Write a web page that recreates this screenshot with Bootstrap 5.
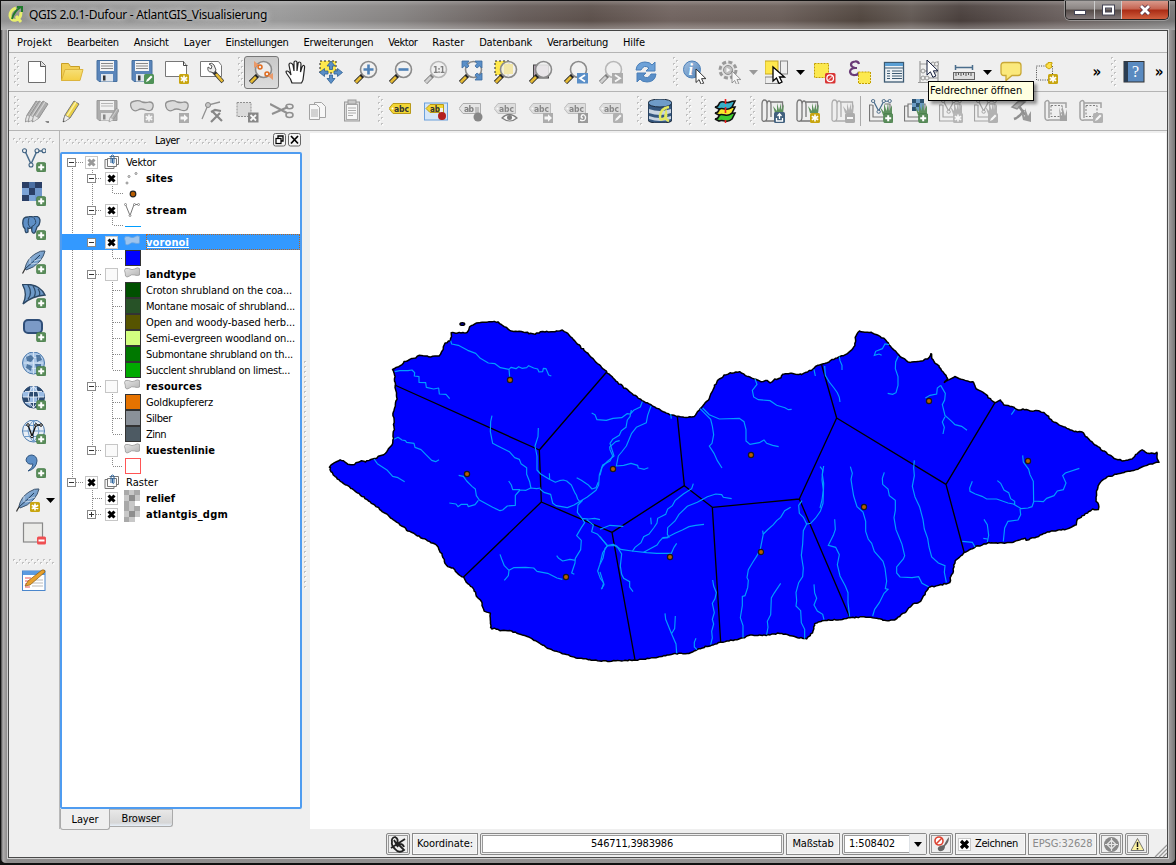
<!DOCTYPE html>
<html lang="de">
<head>
<meta charset="utf-8">
<title>QGIS 2.0.1-Dufour - AtlantGIS_Visualisierung</title>
<link href="https://cdn.jsdelivr.net/npm/bootstrap@5.3.0/dist/css/bootstrap.min.css" rel="stylesheet">
<script src="https://cdn.jsdelivr.net/npm/bootstrap@5.3.0/dist/js/bootstrap.bundle.min.js"></script>
<style>
html,body{height:100%;margin:0;overflow:hidden;background:#111}
body{font-family:"DejaVu Sans Condensed","DejaVu Sans",sans-serif;font-stretch:condensed;font-size:11px;line-height:16px;color:#000}
svg{display:block;flex:none;overflow:visible}
.win{width:1176px;height:865px;background:linear-gradient(90deg,#444 0,#b0aeae 2px,#8e8c8c 6px,#9b9999 1169px,#777 1174px,#333);border:2px solid #111;border-width:1px 1px 2px;border-radius:7px 7px 6px 6px;padding:0 7px 6px 7px}
.titlebar{height:29px;margin:0 -7px;padding:0 6px 0 8px;background:linear-gradient(180deg,#ffffff40 0,#ffffff10 5px,#ffffff00 20px,#ffffff50 29px),linear-gradient(90deg,#929292 0,#9a9a9a 280px,#858281 400px,#665c59 520px,#5c504b 590px,#70635f 670px,#6a5e59 780px,#51463f 860px,#625954 910px,#493f3c 960px,#695f5d 1060px,#777 1176px)}
.title-text{font-family:"Noto Sans","Open Sans",sans-serif;font-stretch:normal;font-size:12px;text-shadow:0 0 7px #ddd,0 0 5px #ccc}
.winbtns{height:19px;border:1px solid #222;border-top:0;border-radius:0 0 5px 5px;box-shadow:0 0 0 1px #bbb8;overflow:hidden;margin-top:0}
.winbtns>div{background:linear-gradient(#a8a3a1,#8a8482 45%,#554b48 50%,#82797a)}
.winbtns>div+div{border-left:1px solid #ccc}
.winbtns>.x{background:linear-gradient(#d99a8c,#c56350 45%,#a92b14 50%,#d15f3e)}
.client{height:828px;background:#efefef;border:1px solid #4a4a4a;border-top-color:#444;box-shadow:0 0 0 1px #cfcfcf}
.menus{height:22px;padding:3.5px 0 0 8px;gap:14.900px;border-bottom:1px solid #b4b4b4}
.tb{border-bottom:1px solid #b4b4b4;height:39px}
.slot{flex:none;height:33px;border:1px solid transparent;border-radius:3px;display:flex;align-items:center;justify-content:center}
.slot.on{background:linear-gradient(#c8c8c8,#dcdcdc);border-color:#777}
.off{filter:grayscale(1);opacity:.55}
.hand{flex:none;display:flex;align-items:center;justify-content:flex-end}
.vtools{width:51px;border-right:1px solid #b8b8b8;padding-top:7px}
.vi{height:34px;display:flex;align-items:center;justify-content:center;position:relative}
.dock{width:242px}
.dgrip{width:8px;height:230px;margin-top:230px;padding-left:2px}
.dock-title{height:21px;padding:2px 0 0 3px}
.tree{height:657px;border:2px solid #4f9cf0;border-radius:2px;background:#fff;position:relative;overflow:hidden}
.trow{height:16px;display:flex;align-items:center;position:relative;white-space:nowrap}
.trow.sel{background:#3399ff;color:#fff}
.trow.sel .nm span{text-decoration:underline}
.trow.sel .nm{outline:1px dotted #b8641e;outline-offset:-1px}
.nm{flex:1;line-height:17px;height:16px}
.lines{position:absolute;left:0;top:0}
.sw{width:16px;height:16px;border:1px solid #333}
.tab-a{width:50px;height:21px;border:1px solid #aaa;border-top:0;border-radius:0 0 3px 3px;text-align:center;padding-top:2px;line-height:17px}
.tab-b{width:63px;height:18px;border:1px solid #aaa;border-top-color:#b5b5b5;border-left:0;border-radius:0 0 3px 0;background:linear-gradient(#e8e8e8,#d6d6d6 80%,#e7f0fa);text-align:center;line-height:18px}
.canvas{background:#fff;width:856px;height:696px}
.status{height:28px;padding-right:18px;gap:2px;padding-top:2px}
.sb{height:22px;border:1px solid #8a8a8a;box-shadow:inset 0 0 0 1px #f8f8f8;display:flex;align-items:center;justify-content:center;flex:none;white-space:nowrap}
.sb.push{box-shadow:inset 0 0 0 1px #eee,inset 0 0 0 2px #999;border-radius:2px}
.tip{position:absolute;left:928px;top:81px;width:106px;height:20px;background:#ffffe1;border:1px solid #000;box-shadow:3px 3px 3px #0006;padding:0 0 0 1px;line-height:17px;z-index:5;white-space:nowrap}
.ptr{position:absolute;left:926px;top:59px;z-index:6}
[data-w]{display:inline-block;white-space:nowrap}
.chev{font-size:15px;font-weight:bold}
</style>
</head>
<body>
<svg class="invisible position-absolute" width="0" height="0">
<defs>
<linearGradient id="gy" x1="0" y1="0" x2="0" y2="1"><stop offset="0" stop-color="#f6df77"/><stop offset="1" stop-color="#f4cf45"/></linearGradient>
<linearGradient id="gb" x1="0" y1="0" x2="1" y2="1"><stop offset="0" stop-color="#a5c2e2"/><stop offset="1" stop-color="#4f82b8"/></linearGradient>
<linearGradient id="gg" x1="0" y1="0" x2="1" y2="1"><stop offset="0" stop-color="#e6e6e6"/><stop offset="1" stop-color="#b4b4b4"/></linearGradient>
<g id="b-star"><rect x="14" y="14" width="10" height="10" rx="1.500" fill="#c8a50f"/><path d="M19 15.500v7M15.800 17.200l6.400 3.600M15.800 20.800l6.400-3.600" stroke="#fff" stroke-width="1.600"/></g>
<g id="b-plus"><rect x="14.500" y="14.500" width="9.500" height="9.500" rx="2" fill="#5a8c5a" stroke="#3f7a43" stroke-width=".6"/><path d="M19.200 16.200v6M16.200 19.200h6" stroke="#fff" stroke-width="2"/></g>
<g id="b-pen"><rect x="14" y="14" width="10" height="10" rx="1.500" fill="#4f9257"/><path d="M16 22l1-2.500 4-4 1.500 1.500-4 4z" fill="#fff"/></g>
<g id="b-arr"><rect x="14" y="14" width="10" height="10" fill="#777"/><path d="M15.500 17.500h3.500v-2.200l4 3.700-4 3.700v-2.200h-3.500z" fill="#fff"/></g>
<g id="cur"><path d="M0 0v15l3.400-3.200 2.300 5.200 2.800-1.200-2.300-5.100h4.800z" fill="#fff" stroke="#222" stroke-width="1"/></g>
<g id="mag"><path d="M1.500 22.500L9 15" stroke="#222" stroke-width="4.500"/><path d="M1.800 22.300L7 17" stroke="#e6bb35" stroke-width="2.800"/><circle cx="14.500" cy="9.500" r="8" fill="#f1f1f1" fill-opacity=".85" stroke="#8a8a8a" stroke-width="1.600"/></g>
<g id="tag"><path d="M0 9.500L4 4.500h17.500v10H4z" fill="#f2d634" stroke="#b99a1a"/><circle cx="3.500" cy="9.500" r="1" fill="#fff"/><text x="5" y="12.500" font-family="DejaVu Sans" font-weight="bold" font-size="8.500" textLength="15" fill="#333">abc</text></g>
<g id="scroll"><path d="M1 21V5q0-4 2.500-4T6 5v13q0 4-2.500 4M6 6q0-4 2-4t2 4v12M1 21q1 2 4 1h9M10 3h11.500v10" fill="#eee" stroke="#777" stroke-width="1.300"/><path d="M14 14l-2-7 4 5V4l2 7 2-7v7l3-6-1 9z" fill="#5e915e"/></g>
<g id="grass"><path d="M13 15l-3-8 4 5V3l2.500 8L18 3l1 8 3-6v10z" fill="#5e915e"/></g>
<g id="vec"><path d="M3 3l6 13L15 3h6" fill="none" stroke="#4a6d8c" stroke-width="1.500"/><g fill="#efefef" stroke="#3d6080" stroke-width="1.100"><circle cx="2.500" cy="2.700" r="2"/><circle cx="9" cy="17" r="2"/><circle cx="15" cy="2.700" r="2"/><circle cx="22" cy="2.700" r="2"/></g></g>
<g id="pencil"><path d="M3 23l2-7L14 2l5 3-9 14z" fill="#e9cf46" stroke="#777"/><path d="M7 17L16 3" stroke="#fbf0a0" stroke-width="1.500"/><path d="M3 23l1-4 3 1.800z" fill="#333"/><path d="M5 16l5 3-5 3.500-1.500-1z" fill="#eee" stroke="#777" stroke-width=".6"/></g>
<g id="gpencil"><path d="M3 23l2-7L14 2l5 3-9 14z" fill="#777" stroke="#444"/><path d="M7 17L16 3" stroke="#bbb" stroke-width="1.300"/><path d="M5 16l5 3-5 3.500-1.500-1z" fill="#ddd" stroke="#555" stroke-width=".6"/></g>
<g id="feather"><path d="M.5 23.500Q4 16 12 9" fill="none" stroke="#333" stroke-width="1.200"/><path d="M3 18Q5 9 13 4q6-4 10-3-1 5-5 10-6 7-14 9z" fill="url(#gb)" stroke="#40566e"/><path d="M3 19Q11 12 18 5" stroke="#1e3a58" fill="none"/><path d="M9 14l7-1M12 11l7-2M8 14l0-6" stroke="#dce8f4" stroke-width=".7"/></g>
<g id="globe"><circle cx="11.500" cy="11" r="11" fill="#e8eef5" stroke="#4a78ab"/><path d="M1 11h21M3 5.500h17M3 16.500h17M11.500 0v22M11.500 0q-11 11 0 22M11.500 0q11 11 0 22" fill="none" stroke="#6e9bcb"/></g>
</defs>
<symbol id="i-new" viewBox="0 0 24 24"><path d="M3.500 1.500h13l4 4v17h-17z" fill="#fff" stroke="#6e6e6e"/><path d="M15.500 1.500v5h5" fill="#ddd" stroke="#555"/></symbol>
<symbol id="i-open" viewBox="0 0 24 24"><path d="M1.500 20.500v-17h7l2 3h9v3" fill="#f2cf55" stroke="#c89f25"/><path d="M1.500 20.500L5 9.500h18l-3 11z" fill="url(#gy)" stroke="#dcb43d"/></symbol>
<symbol id="i-save" viewBox="0 0 24 24"><path d="M2 .5h20v21H4l-2-2z" fill="#5a85ba" stroke="#47719f"/><rect x="5" y="1" width="14" height="10" fill="#f4f4f4"/><path d="M6 3.500h12M6 6h12M6 8.500h12" stroke="#888"/><rect x="6" y="14" width="12" height="7.500" fill="#dfe5ec"/><rect x="8" y="15.500" width="2.500" height="5" fill="#333"/></symbol>
<symbol id="i-saveas" viewBox="0 0 24 24"><use href="#i-save" width="24" height="24"/><use href="#b-pen"/></symbol>
<symbol id="i-newprint" viewBox="0 0 24 24"><path d="M.5 1.500h18l3 4v11H.500z" fill="#fff" stroke="#777"/><path d="M18.500 1.500v4h4" fill="none" stroke="#444"/><use href="#b-star"/></symbol>
<symbol id="i-printmgr" viewBox="0 0 24 24"><path d="M.5 1.500h18l3 4v11H.500z" fill="#fff" stroke="#777"/><path d="M13 11l10 11" stroke="#333" stroke-width="4"/><path d="M16 14l6.500 7.500" stroke="#e9bd35" stroke-width="2.600"/><path d="M8 7q-1 5 3 5l3 1 2-3-2-5q-2-3-5-1l3 2-1 3z" fill="#eee" stroke="#555"/></symbol>
<symbol id="i-touch" viewBox="0 0 24 24"><use href="#mag"/><g stroke="#e06a1c" fill="none" stroke-width="1.500"><path d="M5 1l5 4-5 3z" fill="#e99a6b" stroke="none"/><circle cx="11" cy="7" r="2"/><circle cx="18" cy="14" r="2"/><path d="M24 20l-5-4 5-3z" fill="#e99a6b" stroke="none"/></g></symbol>
<symbol id="i-pan" viewBox="0 0 24 24"><path d="M8 23q-1-4-5-9-2-3 0-3t4 4L5 5q0-2 1.500-2T9 5l1 6V2.500Q10 1 11.500 1T13 2.500V11l1-7q0-2 1.500-2T17 4l-.5 8L18 7q1-2 2-1.500t.5 2.500L19.500 16q0 4-2 7z" fill="#fff" stroke="#222" stroke-width="1.200"/></symbol>
<symbol id="i-pansel" viewBox="0 0 24 24"><rect x="1" y="1" width="16" height="12" fill="#ffe84d" stroke="#222" stroke-dasharray="2 2"/><g fill="#5a8fc8" stroke="#2f5f92" stroke-width=".8"><path d="M12 1l4 5h-2.500v3.500h-3V6H8zM12 23.500l4-5h-2.500V15h-3v3.500H8zM.5 12.500l5-4V11H9v3H5.500v2.500zM23.500 12.500l-5-4V11H15v3h3.500v2.500z"/></g></symbol>
<symbol id="i-zin" viewBox="0 0 24 24"><use href="#mag"/><path d="M14.500 4.500v10M9.500 9.500h10" stroke="#4f82b8" stroke-width="2.600"/></symbol>
<symbol id="i-zout" viewBox="0 0 24 24"><use href="#mag"/><path d="M9.500 9.500h10" stroke="#4f82b8" stroke-width="2.600"/></symbol>
<symbol id="i-z11" viewBox="0 0 24 24"><use href="#mag"/><text x="9" y="13" font-family="DejaVu Sans" font-weight="bold" font-size="8.500" textLength="12" fill="#222">1:1</text></symbol>
<symbol id="i-zfull" viewBox="0 0 24 24"><use href="#mag"/><path d="M3 1h7L8 3.500 10 6 8 8 5.500 6 3 8zM23 1h-7l2 2.500L16 6l2 2 2.500-2L23 8zM23 20h-7l2-2.500-2-2.500 2-2 2.500 2 2.500-2z" fill="#5a8fc8" stroke="#3a6ba0" stroke-width=".8"/></symbol>
<symbol id="i-zsel" viewBox="0 0 24 24"><rect x="1" y="1" width="14" height="14" fill="#ffe84d" stroke="#222" stroke-dasharray="2 2"/><use href="#mag"/><rect x="10" y="4" width="9" height="10" fill="#f2e6a8"/></symbol>
<symbol id="i-zlay" viewBox="0 0 24 24"><rect x="4.500" y="5" width="15" height="13" fill="#b3a2b3" stroke="#444"/><use href="#mag"/></symbol>
<symbol id="i-zlast" viewBox="0 0 24 24"><use href="#mag"/><rect x="13" y="13" width="11" height="10.500" fill="#5a8fc8"/><path d="M21 15l-5 3.200 5 3.300" fill="none" stroke="#fff" stroke-width="1.800"/></symbol>
<symbol id="i-znext" viewBox="0 0 24 24"><use href="#mag"/><rect x="13" y="13" width="11" height="10.500" fill="#777"/><path d="M16 15l5 3.200-5 3.300" fill="none" stroke="#fff" stroke-width="1.800"/></symbol>
<symbol id="i-refresh" viewBox="0 0 24 24"><path d="M2 10Q3 2 11 2q5 0 7 3l3-3v9h-9l3-3q-5-4-8 2z" fill="#6ea2d8" stroke="#4a7fb8"/><path d="M22 14q-1 8-9 8-5 0-7-3l-3 3v-9h9l-3 3q5 4 8-2z" fill="#5a8fc8" stroke="#4a7fb8"/></symbol>
<symbol id="i-info" viewBox="0 0 24 24"><circle cx="9" cy="9.500" r="8.500" fill="url(#gb)" stroke="#4a7fb8"/><text x="5.500" y="15" font-family="Liberation Serif" font-style="italic" font-weight="bold" font-size="16" fill="#fff">i</text><use href="#cur" transform="translate(13 9) scale(.9)"/></symbol>
<symbol id="i-gear" viewBox="0 0 24 24"><circle cx="10" cy="10" r="8" fill="#ddd" stroke="#555" stroke-width="3" stroke-dasharray="4 2.300"/><circle cx="10" cy="10" r="4.500" fill="#999" stroke="#444"/><path d="M8.500 7.500v5l4-2.500z" fill="#fff"/><use href="#cur" transform="translate(14 11) scale(.8)"/></symbol>
<symbol id="i-select" viewBox="0 0 24 24"><rect x="0" y="1" width="13" height="13" fill="#ffe84d" stroke="#c8a820"/><rect x="15.500" y="1" width="7" height="13" fill="#eee" stroke="#888"/><rect x="0" y="17" width="13" height="6.500" fill="#eee" stroke="#888"/><path d="M8 7l0 14 3.500-3 2.500 5.500 3-1.500-2.500-5h5z" fill="#fff" stroke="#000" stroke-width="1.300"/></symbol>
<symbol id="i-desel" viewBox="0 0 24 24"><rect x="2.500" y="3.500" width="14" height="14" fill="#fce94f" stroke="#c4a000" stroke-dasharray="2 1"/><rect x="13" y="13" width="10.500" height="10.500" rx="1.500" fill="#d93434"/><circle cx="18.200" cy="18.200" r="3.300" fill="none" stroke="#fff" stroke-width="1.300"/><path d="M16 20.500l4.500-4.500" stroke="#fff"/></symbol>
<symbol id="i-expr" viewBox="0 0 24 24"><path d="M12 4Q11 1 8 1.500 4 2 4 4.500 4 7 8 8q-5 .5-5 4 1 3.500 5 3 3.500 0 4-3M7 8h3" fill="none" stroke="#6a3b77" stroke-width="2.200"/><rect x="11.500" y="12" width="12" height="11.500" fill="#fce94f" stroke="#c4a000" stroke-dasharray="2 1"/></symbol>
<symbol id="i-table" viewBox="0 0 24 24"><rect x="2.500" y="2.500" width="19" height="19.500" fill="#eef2f5" stroke="#3c5a72" stroke-width="1.300"/><path d="M3 4.500h18" stroke="#5a9fd4" stroke-width="3"/><path d="M3 8h18M5 11h3M10 11h10M5 13.500h3M10 13.500h10M5 16h3M10 16h10M5 18.500h3M10 18.500h10" stroke="#3c5a72" stroke-width="1.100"/></symbol>
<symbol id="i-abacus" viewBox="0 0 24 24"><path d="M3 1v21M21 1v21M3 4h18M3 11h18M3 18h18M1 22.500h22" stroke="#999" stroke-width="1.200"/><g fill="#eee" stroke="#999"><circle cx="16" cy="4" r="2"/><circle cx="19.500" cy="4" r="2"/><circle cx="6" cy="11" r="2"/><circle cx="18" cy="11" r="2"/><circle cx="6" cy="18" r="2"/><circle cx="10" cy="18" r="2"/></g></symbol>
<symbol id="i-ruler" viewBox="0 0 24 24"><path d="M3 7.500h18M3.500 5v5M20.500 5v5" stroke="#4a6d8c" stroke-width="1.500"/><rect x="1.500" y="12.500" width="21" height="7" fill="#ddd" stroke="#666"/><path d="M4 13v3M6.500 13v2M9 13v3M11.500 13v2M14 13v3M16.500 13v2M19 13v3" stroke="#555"/></symbol>
<symbol id="i-tip" viewBox="0 0 24 24"><path d="M5 2.500h14q3 0 3 3v7q0 3-3 3h-6l-6 5v-5H5q-3 0-3-3v-7q0-3 3-3z" fill="#fbe97c" stroke="#c9a836" stroke-width="1.300"/></symbol>
<symbol id="i-bookmark" viewBox="0 0 24 24"><rect x="2.500" y="6" width="16" height="14" fill="none" stroke="#444" stroke-dasharray="1 1.300"/><path d="M12 4h2V2.500h4V4h-1l1 3-3 2-3-2z" fill="#ffe14a" stroke="#c8a50f"/><use href="#b-star"/></symbol>
<symbol id="i-help" viewBox="0 0 24 24"><rect x="2" y="1.500" width="20" height="20.500" fill="#5a8ac0" stroke="#333"/><rect x="2" y="1.500" width="4" height="20.500" fill="#2b3d52"/><text x="10" y="17" font-family="Liberation Serif" font-size="16" fill="#fff">?</text></symbol>
<symbol id="i-pencils" viewBox="0 0 24 24"><use href="#gpencil" transform="translate(-3 0)"/><use href="#gpencil"/><use href="#gpencil" transform="translate(4 0)"/><path d="M20 22h6l-3 3z" fill="#333"/></symbol>
<symbol id="i-pencil" viewBox="0 0 24 24"><use href="#pencil"/></symbol>
<symbol id="i-saveedit" viewBox="0 0 24 24"><path d="M2 1.500h20v20H4l-2-2z" fill="#777" stroke="#555"/><rect x="5" y="2" width="14" height="9" fill="#f4f4f4"/><path d="M6 4.500h12M6 7h12" stroke="#888"/><rect x="6" y="14" width="12" height="7.500" fill="#ddd"/><rect x="8" y="15.500" width="2.500" height="5" fill="#333"/><use href="#gpencil" transform="translate(12 8) scale(.65)"/></symbol>
<symbol id="i-addf" viewBox="0 0 24 24"><path d="M2 10Q-2 3 5 2q4-1 7 1 4 1 7 0 5 0 4 5-1 5-7 3-5-2-8 0-4 2-6-1z" fill="#ccc" stroke="#444" stroke-width="1.300"/><rect x="14" y="14" width="10" height="10" rx="1.500" fill="#888"/><path d="M19 15.500v7M15.800 17.200l6.400 3.600M15.800 20.800l6.400-3.600" stroke="#fff" stroke-width="1.600"/></symbol>
<symbol id="i-movef" viewBox="0 0 24 24"><path d="M2 10Q-2 3 5 2q4-1 7 1 4 1 7 0 5 0 4 5-1 5-7 3-5-2-8 0-4 2-6-1z" fill="#ccc" stroke="#444" stroke-width="1.300"/><use href="#b-arr"/></symbol>
<symbol id="i-node" viewBox="0 0 24 24"><path d="M2 20L8 6l12-3" fill="none" stroke="#444" stroke-width="1.300"/><circle cx="8" cy="6" r="2.500" fill="#aaa" stroke="#333"/><path d="M11 23l9-9M13 13l9 9M11 13l4-2 6 1" fill="none" stroke="#333" stroke-width="2.200"/></symbol>
<symbol id="i-delsel" viewBox="0 0 24 24"><rect x="2" y="3.500" width="14" height="14" fill="#ccc" stroke="#444" stroke-dasharray="2 1"/><rect x="13" y="13.500" width="10.500" height="10" fill="#333"/><path d="M15.500 16l5.500 5.500M21 16l-5.500 5.500" stroke="#fff" stroke-width="1.800"/></symbol>
<symbol id="i-cut" viewBox="0 0 24 24"><path d="M0 5l17 9M2 15l16-7" stroke="#444" stroke-width="2"/><ellipse cx="19.500" cy="7.500" rx="3.500" ry="2.200" fill="none" stroke="#444" stroke-width="1.600"/><ellipse cx="19.500" cy="16" rx="3.500" ry="2.500" fill="none" stroke="#444" stroke-width="1.600"/></symbol>
<symbol id="i-copy" viewBox="0 0 24 24"><path d="M9.500 3.500h7l4 4v11h-11z" fill="#fff" stroke="#666"/><path d="M4.500 5.500h7l3 3v12h-10z" fill="#fff" stroke="#666"/><path d="M6 11h7M6 13h7M6 15h7M6 17h7" stroke="#777"/></symbol>
<symbol id="i-paste" viewBox="0 0 24 24"><rect x="4.500" y="3" width="15" height="19" fill="#ccc" stroke="#555"/><rect x="6.500" y="5.500" width="11" height="15" fill="#fff" stroke="#777"/><rect x="8" y="1" width="8" height="4" fill="#aaa" stroke="#555"/><path d="M8 9h8M8 11.500h8M8 14h8M8 16.500h5" stroke="#777"/></symbol>
<symbol id="i-abc" viewBox="0 0 24 24"><use href="#tag"/></symbol>
<symbol id="i-abcpin" viewBox="0 0 24 24"><rect x=".5" y="4" width="23" height="17" fill="#d5e6f8" stroke="#6ba0dc"/><path d="M2 9.500l4-4h13.500v8H6z" fill="#f2d634" stroke="#b99a1a"/><text x="6" y="12.500" font-family="DejaVu Sans" font-weight="bold" font-size="8" textLength="10" fill="#333">ab</text><path d="M17.500 9v8" stroke="#eee" stroke-width="3"/><circle cx="18" cy="17" r="4" fill="#b32020"/></symbol>
<symbol id="i-abcpin2" viewBox="0 0 24 24"><path d="M0 9.500L4 4.500h17.500v10H4z" fill="#ddd" stroke="#777"/><text x="5" y="12.500" font-family="DejaVu Sans" font-weight="bold" font-size="8.500" textLength="10" fill="#222">ab</text><path d="M18 8v8" stroke="#999" stroke-width="4"/><circle cx="19" cy="18" r="4.500" fill="#333"/></symbol>
<symbol id="i-abceye" viewBox="0 0 24 24"><use href="#tag"/><path d="M8 19q7-7 15 0-7 6-15 0z" fill="#fff" stroke="#222" stroke-width="1.200"/><circle cx="15.500" cy="18.500" r="2.500" fill="#222"/></symbol>
<symbol id="i-abcmove" viewBox="0 0 24 24"><use href="#tag"/><use href="#b-arr"/></symbol>
<symbol id="i-abcrot" viewBox="0 0 24 24"><use href="#tag"/><rect x="14" y="14" width="10" height="10" fill="#555"/><path d="M16 21q6 2 5.500-3-1-3-3.500-2-2 3 1 3" fill="none" stroke="#fff" stroke-width="1.400"/></symbol>
<symbol id="i-abcedit" viewBox="0 0 24 24"><use href="#tag"/><use href="#b-pen"/></symbol>
<symbol id="i-db" viewBox="0 0 24 24"><path d="M0 4v17q0 3 12 3t12-3V4z" fill="#35577f" stroke="#1d2c3e"/><path d="M1 10q11 4 22 0v4q-11 4-22 0zM1 17q11 4 22 0v3q-11 4-22 0z" fill="#c8d4e2"/><ellipse cx="12" cy="4" rx="12" ry="4" fill="#6f9cc8" stroke="#1d2c3e"/><path d="M21 8q-8 1-9 9 0 5 3 3 4-1 3-6-2 6 3 8" fill="none" stroke="#e4e860" stroke-width="2.500"/></symbol>
<symbol id="i-layers" viewBox="0 0 24 24"><g stroke="#111" stroke-width="1.600"><path d="M2 20q3 0 4-3t5-2 6 0 5-1l-3 6q-3 3-7 2t-6 0z" fill="#3ecb2f"/><path d="M2 14q3 0 4-3t5-2 6 0 5-1l-3 6q-3 3-7 2t-6 0z" fill="#f7e92c"/><path d="M2 8q3 0 4-3t5-2 6 0 5-1l-3 6q-3 3-7 2t-6 0z" fill="#39b0c9"/></g><path d="M12.500 0v5M12.500 8v6M12.500 21v3" stroke="#e22" stroke-width="1.600"/></symbol>
<symbol id="i-gr1" viewBox="0 0 24 24"><use href="#scroll"/><rect x="13" y="13" width="11" height="11" rx="1.500" fill="#41607e"/><path d="M15.500 19v3h6v-3M18.500 20v-5M16.500 17l2-2.200 2 2.200" fill="none" stroke="#fff" stroke-width="1.300"/></symbol>
<symbol id="i-gr2" viewBox="0 0 24 24"><use href="#scroll"/><use href="#b-star"/></symbol>
<symbol id="i-gr3" viewBox="0 0 24 24"><use href="#scroll"/><rect x="14" y="14" width="10" height="10" rx="1.500" fill="#777"/><path d="M16 19h6" stroke="#fff" stroke-width="2"/></symbol>
<symbol id="i-gv1" viewBox="0 0 24 24"><path d="M3.500 6H.5v16h14M16 5h5v8M4 6v12h10" fill="none" stroke="#777" stroke-width="1.200"/><g transform="translate(2 0) scale(.85 .75)"><use href="#vec"/></g><use href="#grass" transform="translate(1 1)"/><use href="#b-plus"/></symbol>
<symbol id="i-gv2" viewBox="0 0 24 24"><path d="M3.500 7H.5v15h14M4 5h17v13H4z" fill="none" stroke="#777" stroke-width="1.200"/><path d="M8 0h12v12H8z" fill="#6c9cc4"/><path d="M8 0h4v4H8zM16 0h4v4h-4zM12 4h4v4h-4zM8 8h4v4H8z" fill="#2c5270"/><use href="#grass" transform="translate(1 1)"/><use href="#b-plus"/></symbol>
<symbol id="i-gv3" viewBox="0 0 24 24"><path d="M3.500 6H.5v16h14M16 5h5v8M4 6v12h10" fill="none" stroke="#666" stroke-width="1.200"/><g transform="translate(2 0) scale(.85 .75)"><use href="#vec"/></g><use href="#grass" transform="translate(1 0)"/><rect x="14" y="14" width="10" height="10" rx="1.500" fill="#888"/><path d="M19 15.500v7M15.800 17.200l6.400 3.600M15.800 20.800l6.400-3.600" stroke="#fff" stroke-width="1.600"/></symbol>
<symbol id="i-gv4" viewBox="0 0 24 24"><path d="M3.500 6H.5v16h14M16 5h5v8M4 6v12h10" fill="none" stroke="#666" stroke-width="1.200"/><g transform="translate(2 0) scale(.85 .75)"><use href="#vec"/></g><use href="#grass" transform="translate(1 0)"/><use href="#b-pen"/></symbol>
<symbol id="i-tools" viewBox="0 0 24 24"><path d="M3 8l7-6 6 1-8 7z" fill="#888" stroke="#444" stroke-width="1.500"/><path d="M10 7l6 9M5 20q6-2 10-9" fill="none" stroke="#444" stroke-width="2.500"/><path d="M14 21l-2-9 4 6V9l3 8 3-5v11z" fill="#555"/></symbol>
<symbol id="i-reg1" viewBox="0 0 24 24"><path d="M1 3v15q0 4 4 3h12M1 3q3-3 4 0v16M5 4h17v5" fill="none" stroke="#666" stroke-width="1.500"/><rect x="7" y="6.500" width="11" height="11" fill="none" stroke="#222" stroke-dasharray="2 1.500"/><path d="M16 22l-1-14 3 10V6l3 11 2-7v12z" fill="#666"/></symbol>
<symbol id="i-reg2" viewBox="0 0 24 24"><path d="M1 3v15q0 4 4 3h12M1 3q3-3 4 0v16M5 4h17v5" fill="none" stroke="#666" stroke-width="1.500"/><rect x="7" y="6.500" width="11" height="11" fill="none" stroke="#222" stroke-dasharray="2 1.500"/><use href="#b-pen"/></symbol>

<symbol id="v-vec" viewBox="0 0 24 24"><use href="#vec"/><use href="#b-plus"/></symbol>
<symbol id="v-ras" viewBox="0 0 24 24"><path d="M0 0h20v19H0z" fill="#6f97cb"/><path d="M7 0h6v6H7zM0 6h7v7H0z" fill="#4a6fa3"/><path d="M0 0h7v6H0zM13 0h7v6h-7zM7 6h6v7H7zM0 13h7v6H0z" fill="#2a3f66"/><path d="M0 6h7v7H0zM7 13h6v6H7z" fill="#7ba3d6"/><use href="#b-plus"/></symbol>
<symbol id="v-pg" viewBox="0 0 24 24"><path d="M1 5q0-4 5-4 3-1 5 0 6-2 7 3 0 5-3 7l-1 3q-1 4-3 3t-1-6q-2 2-4 1v4q-3 2-3-3Q0 10 1 5z" fill="#5e8fc6" stroke="#2b4764" stroke-width="1.300"/><path d="M7 2q-2 6 1 9M12 2q4 5-1 8" fill="none" stroke="#2b4764"/><use href="#b-plus"/></symbol>
<symbol id="v-fea" viewBox="0 0 24 24"><use href="#feather"/><use href="#b-plus"/></symbol>
<symbol id="v-sail" viewBox="0 0 24 24"><path d="M.5.500Q17-1 23 11 10 12 1 20 6 10 .5.500z" fill="#6e9ac8" stroke="#2b4764" stroke-width="1.400"/><path d="M6 1q5 8 0 14M11 2q4 6 1 11M16 5q3 4 1 7" fill="none" stroke="#2b4764" stroke-width="1.200"/><use href="#b-plus"/></symbol>
<symbol id="v-ora" viewBox="0 0 24 24"><rect x="2" y="2" width="18" height="13" rx="4" fill="#7b9ac6" stroke="#2f4e78" stroke-width="2"/><use href="#b-plus"/></symbol>
<symbol id="v-wms" viewBox="0 0 24 24"><circle cx="11.500" cy="11" r="11" fill="#a9c6e6" stroke="#4a78ab"/><path d="M2 11h19M3 5.500h17M3 16.500h17M11.500 0v22M6 2v18M17 2v18" stroke="#dce8f5" stroke-width=".8"/><path d="M4 5l5-2 3 3-3 4-4-1zM14 3h4l2 5-5 2zM5 12l5 2-1 5-5-3zM13 12h6v5l-4 2z" fill="#35608f" opacity=".8"/><use href="#b-plus"/></symbol>
<symbol id="v-wcs" viewBox="0 0 24 24"><circle cx="11.500" cy="11" r="11" fill="#2c4a70" stroke="#2c4a70"/><path d="M8 .5h7v5H8zM1 6h6v5H.500zM8 11h7v6H8zM16 6h6l.5 5H16zM3 17h5l1 4zM15 17h5l-4 4z" fill="#9bbce4"/><path d="M1 11h21M3 5.500h17M3 16.500h17M11.500 0v22M11.500 0q-11 11 0 22M11.500 0q11 11 0 22" fill="none" stroke="#e6eef8" stroke-width=".9"/><use href="#b-plus"/></symbol>
<symbol id="v-wfs" viewBox="0 0 24 24"><use href="#globe"/><path d="M6 5l4 11 4-11h5" fill="none" stroke="#111" stroke-width="1.300"/><g fill="#fff" stroke="#111"><circle cx="6" cy="5" r="1.300"/><circle cx="10" cy="16.500" r="1.300"/><circle cx="14" cy="5" r="1.300"/><circle cx="19" cy="5" r="1.300"/></g><use href="#b-plus"/></symbol>
<symbol id="v-csv" viewBox="0 0 24 24"><path d="M6 17q5-3 5-7-6 1-7-4 1-5 6-5 5 1 5 6-1 8-9 10z" fill="#5e8fc6" stroke="#2f5580"/><use href="#b-plus"/></symbol>
<symbol id="v-new" viewBox="0 0 24 24"><use href="#feather"/><use href="#b-star"/></symbol>
<symbol id="v-del" viewBox="0 0 24 24"><rect x="1.500" y="1" width="19" height="19" fill="#ebebe8" stroke="#888" stroke-width="1.200"/><rect x="15" y="14.500" width="9" height="8" rx="1.500" fill="#ef4f52"/><path d="M16.500 18.500h6" stroke="#fff" stroke-width="2"/></symbol>
<symbol id="v-edit" viewBox="0 0 24 24"><rect x=".5" y="2" width="22.500" height="19.500" fill="#fff" stroke="#4a86cc"/><path d="M1 4h22" stroke="#5a9ae0" stroke-width="4"/><path d="M3 9h6M3 12h5M3 15h4M3 18h5" stroke="#e55"/><path d="M10 11h11M10 14h11M10 17h11" stroke="#bbb"/><path d="M3 17l3-5L20 1q3-1 3 2L8 16z" fill="#e8a02c" stroke="#8a5a10" stroke-width=".7"/></symbol>

<symbol id="t-grp" viewBox="0 0 16 16"><path d="M3 5.500H1v9h9v-1.500M3.500 4.500h9v8h-9z" fill="#f8f8f8" stroke="#777"/><path d="M5.500 2.500h9v8h-2" fill="none" stroke="#777"/><path d="M7 9V2q1.500-2 3 0v7q-1 1-1.500 0V4" fill="none" stroke="#2d66a0"/></symbol>
<symbol id="t-pts" viewBox="0 0 16 16"><g fill="#fff" stroke="#888"><circle cx="5" cy="6.500" r="1"/><circle cx="12" cy="3.500" r="1"/><circle cx="3" cy="13" r="1"/></g></symbol>
<symbol id="t-line" viewBox="0 0 16 16"><path d="M1.500 2.500L6 13.500l4-11h5" fill="none" stroke="#777"/><g fill="#fff" stroke="#777" stroke-width=".8"><circle cx="1.500" cy="2.500" r="1"/><circle cx="6" cy="13.500" r="1"/><circle cx="10.500" cy="2.500" r="1"/><circle cx="14.500" cy="2.500" r="1"/></g></symbol>
<symbol id="t-poly" viewBox="0 0 16 16"><path d="M.5 4.500q0-3 4-2 4 2 6 .5 3-2 5-.5v6.500q-2 1-5 0-3-1-5 1-3 2-4 0 0-3-1-5.500z" fill="url(#gg)" stroke="#999" stroke-width=".8"/></symbol>
<symbol id="t-polys" viewBox="0 0 16 16"><path d="M.5 4.500q0-3 4-2 4 2 6 .5 3-2 5-.5v6.500q-2 1-5 0-3-1-5 1-3 2-4 0 0-3-1-5.500z" fill="#9cc4ee" stroke="#6aa4e0" stroke-width=".8"/></symbol>
<symbol id="t-ras" viewBox="0 0 16 16"><path d="M0 0h16v16H0z" fill="#c8c8c8"/><path d="M0 0h5v5H0zM10 0h6v5h-6zM0 11h5v5H0z" fill="#a9a9a9"/><path d="M5 5h6v6H5z" fill="#8e8e8e"/><path d="M11 11h5v5h-5z" fill="#fff"/></symbol>
</svg>

<div class="win">
  <div class="titlebar d-flex align-items-start">
    <svg class="mt-1" width="14" height="18" viewBox="0 0 14 18"><path d="M7 3Q1 5 1 11q1 5 6 4 5-1 5-8M7 11l5 6" fill="none" stroke="#e8ef6e" stroke-width="3"/><path d="M3 14Q5 6 12 2M8 2h5v5" fill="none" stroke="#1f7a2a" stroke-width="2"/></svg>
    <div class="title-text ms-1" style="padding:6px 0 0 2px"><span data-w="238">QGIS 2.0.1-Dufour - AtlantGIS_Visualisierung</span></div>
    <div class="winbtns d-flex ms-auto">
      <div style="width:28px"><svg width="28" height="18"><rect x="8.500" y="9.500" width="11" height="4" fill="#fff" stroke="#445"/></svg></div>
      <div style="width:27px"><svg width="27" height="18"><rect x="9" y="5.500" width="9" height="7" fill="none" stroke="#445" stroke-width="4"/><rect x="9" y="5.500" width="9" height="7" fill="none" stroke="#fff" stroke-width="2"/></svg></div>
      <div class="x" style="width:47px"><svg width="47" height="18"><path d="M19 5l8 8M27 5l-8 8" stroke="#534" stroke-width="4.500"/><path d="M19 5l8 8M27 5l-8 8" stroke="#fff" stroke-width="2.800"/></svg></div>
    </div>
  </div>

  <div class="client">
    <nav class="menus d-flex">
      <span data-w="35">Projekt</span><span data-w="52">Bearbeiten</span><span data-w="35">Ansicht</span><span data-w="27">Layer</span><span data-w="63">Einstellungen</span><span data-w="70">Erweiterungen</span><span data-w="29">Vektor</span><span data-w="32">Raster</span><span data-w="53">Datenbank</span><span data-w="61">Verarbeitung</span><span data-w="22">Hilfe</span>
    </nav>
    <div class="tb d-flex align-items-center" id="tb1"></div>
    <div class="tb d-flex align-items-center" id="tb2"></div>

    <div class="d-flex" style="height:698px">
      <div class="vtools" id="vt"></div>
      <div class="dock">
        <div class="dock-title d-flex align-items-start">
          <div class="hg" style="padding-top:6px"></div>
          <span class="mx-2" data-w="24">Layer</span>
          <div class="hg" style="padding-top:6px"></div>
          <svg class="ms-auto" width="29" height="14" viewBox="0 0 29 14"><rect x=".5" y=".5" width="12" height="12.500" rx="2" fill="#f4f4f4" stroke="#666"/><path d="M5 5V3h5v5H8" fill="none" stroke="#000" stroke-width="1.300"/><rect x="3" y="5.500" width="5" height="5" fill="#fff" stroke="#000" stroke-width="1.200"/><rect x="15.500" y=".5" width="12" height="12.500" rx="2" fill="#f4f4f4" stroke="#666"/><path d="M18 3l7 7.500M25 3l-7 7.500" stroke="#000" stroke-width="1.700"/></svg>
        </div>
        <div class="tree" id="tree">
          <svg class="lines" width="100" height="370" viewBox="62 154 100 370"><path d="M72.500 166v312M92.500 170v282M76 162.500h8M76 482.500h8M92.500 486v26M92.500 498.500h10M96 178.500h6M96 210.500h6M96 242.500h6M96 274.500h6M96 386.500h6M96 450.500h6M96 514.500h6M112.500 186v7h10M112.500 218v7h10M112.500 250v8h10M112.500 282v88h10M112.500 290.500h10M112.500 306.500h10M112.500 322.500h10M112.500 338.500h10M112.500 354.500h10M112.500 394v40h10M112.500 402.500h10M112.500 418.500h10M112.500 458v8h10" fill="none" stroke="#888" stroke-dasharray="1 1" shape-rendering="crispEdges"/></svg>
        </div>
        <div class="d-flex"><div class="tab-a"><span data-w="27">Layer</span></div><div class="tab-b"><span data-w="39">Browser</span></div><div class="flex-fill border-top border-secondary-subtle"></div></div>
      </div>
      <div class="dgrip" id="dg"></div>
      <svg class="canvas mt-auto" style="overflow:hidden" viewBox="310 133 856 696">
        <g transform="translate(320 310) scale(.33333)" stroke="#000" stroke-width="4.500" stroke-linejoin="round">
          <path id="coast" fill="#00f" d="M30 470L40 459 62 449 72 455 85 463 98 464 108 459 120 456 126 452 135 455 148 451 162 447 175 440 195 433 203 418 217 403 220 385 222 350 220 305 226 285 232 262 227 235 224 200 218 178 245 165 255 153 280 145 300 136 330 141 358 136 370 115 378 98 392 92 394 68 440 69 452 50 467 38 500 36 518 33 538 38 552 50 575 64 612 66 640 73 665 66 710 64 728 61 745 74 760 90 860 186 890 214 915 236 965 270 995 287 1050 314 1072 319 1105 323 1125 318 1140 298 1165 270 1175 245 1192 212 1215 195 1235 188 1258 186 1280 198 1305 207 1325 216 1340 210 1350 218 1365 208 1382 206 1388 192 1400 190 1445 194 1480 176 1495 164 1515 162 1540 148 1560 141 1595 123 1605 108 1607 80 1615 63 1650 67 1675 76 1700 93 1720 118 1745 143 1770 157 1800 155 1825 145 1835 130 1837 150 1855 166 1868 185 1883 203 1872 218 1890 208 1905 201 1920 206 1940 214 1962 217 1966 235 1990 247 2010 267 2025 278 2040 270 2050 283 2070 291 2082 291 2090 298 2115 299 2140 305 2155 301 2175 311 2200 335 2235 352 2260 364 2285 365 2300 381 2335 412 2385 446 2410 453 2435 446 2452 430 2465 420 2480 430 2508 430 2510 425 2510 448 2516 457 2485 463 2450 479 2405 488 2360 502 2338 519 2330 540 2328 570 2336 583 2335 600 2315 598 2295 614 2270 630 2270 644 2235 658 2185 665 2150 680 2120 690 2116 686 2070 698 2005 699 1965 711 1933 729 1905 752 1897 790 1887 819 1845 828 1825 833 1810 862 1798 878 1780 882 1755 907 1722 931 1690 932 1683 925 1625 921 1590 923 1565 929 1510 931 1485 939 1476 970 1460 987 1430 982 1380 969 1340 975 1285 976 1270 984 1202 997 1140 1015 1105 1031 1070 1031 1000 1043 945 1050 860 1054 780 1046 735 1033 685 1015 650 995 620 978 580 966 560 960 540 962 535 957 513 955 511 912 492 903 487 885 487 875 470 860 463 840 450 825 440 818 432 803 405 785 403 777 378 767 368 738 350 706 318 690 262 661 230 637 150 575 105 543 50 505 32 484z"/>
          <ellipse cx="427" cy="42" rx="7" ry="4" fill="#00f"/>
          <g fill="none" stroke-width="4"><path d="M224 225L658 420 860 186M658 420L664 576 430 802M664 576L876 667 1093 527 1072 319M876 667L945 1050M1093 527L1177 592 1202 997M1177 592L1438 567 1550 324 1505 165M1438 567L1590 923M1550 324L1878 523 2025 278M1878 523L1933 729"/></g>
          <g fill="none" stroke="#009dff" stroke-width="3.500">
            <path d="M392 92l3 10 20 4 28 15 24 9 14 15 24 14 20 2 16 12 26 5 6-6 15 4 8-6 10 5 14-2 6-6 15 7 12 3 4 9 11-1 2-10 8 1 4 9 4 10 8 3M567 178l2 22"/>
            <path d="M224 185l15-3 25 0 12-2 8 8-1 10 14 2 0 17 20 1 2 14 22 5 15-3 2 18 20 1 11 13"/>
            <path d="M222 388l12-6 12 8 10 2 4 5 22 3 3 12 18 7 14 14 18 18 12 4 10-6M162 447l10 14 30 20 16 18 16 4 20 12"/>
            <path d="M416 496l14 3 10 14 16 16 10 8 3 20 9 13 40 22 22 10 8-2 14-12 24-2 0-30 14-16 18 1 14-7 18 2 12-2M388 579l20 3 6 8 10-7 18 0 3 7 20-6 10-13M600 539l-22 0-4-14-8-12"/>
            <path d="M516 317l-4 18 -1 30 7 35 14 7 36 18 16 18 14 5 5 13 17 12 0 20 9 22 4 20M655 354l-1 26-9 28 6 30 0 42 11 12 26 16 18 9 12-5 12-2 10 3 14 12 10 22 5 8 4 12 8 10M688 490l1 18M770 503l14 8 20 13 12 13 12-4 7-17"/>
            <path d="M660 537l12 10 20 6 6 26 10 8 34 6 20-8 26-16 14-8 26-20 8-16 2-30 10-30 22-12 8-16-8-18-1-8 18-16 12-3M788 571l-14 14-2 22 14 18 8 13-10 15-14 24 14 14-2 28-16 26-1 14-10 30 8 4M786 625l20 2 18-2 16 4M710 737l6 8 12 8 22-5 16 3M540 733l5 14 8 20 14 14 14-8 36-1 24 2 10 10 32 6 28 14 16 4M567 781l-2 16-12 14M800 629l20 16-5 20 18 8 30 34-8 8-6 30-10 20-6 18 8 22 10 14-5 17M862 707l18-4 14 10"/>
            <path d="M815 309l10 5 6 15 28 2 20-6 26-2 16-12 10 1 10-11 20-10 6-16M934 300l-4 20-8 10-4 22-14 10-6 14-20 12-8 12 12 38-20 16-16 18-6 24M993 288l-10 28-4 22-30 14-14 18-16 38-14 18-10 12-6 30 22-2 22-6 20 6 2 8 18 4 12-5"/>
          </g>
        </g>
        <g transform="translate(600 340) scale(.33333)" fill="none" stroke="#009dff" stroke-width="3.500">
          <path d="M280 431l-5 15-25 16-25 20-8 15-14 10-6 16-24 12-2 14-10 15-14 18-16 8-8 18-18 14-8 12M152 533l2 20M395 476l-25-4-5-8-18-2-25 8-30 17-30 12-25 24-12 20-22 20-1 20 5 8-18 2-10 10-8 12-40 22M205 585l-2 8-18 2M205 590l20-10 22-10 20-10 20-4 25-3"/>
          <path d="M0 568l30-12 40 3M0 590l22 28 25-2 15 12 34 5 44 5 30 2 44 0 8-18 8-12M22 618l-14 20-8 34M0 696l12 38-8 14M50 618l15 24-4 36 4 25 6 12 18 10 0 16 10 14M195 820l2 18 17 42 14 32 2 28M226 828l-2 38-10 16M288 895l-5 12 0 14 8 8M338 720l3 18 8 20-4 18-8 14 6 28-6 20 4 14-6 22 2 20-5 20"/>
          <path d="M300 206l12 12 20 20 5 20 4 26-5 26-8 8 14 22 10 22 14 22M308 204l20 20 30 13 60-2 14 10 6 24 0 34 12 10 28-5 14-8 8 10 18 6 18 4M465 117l6 16-14 18 4 20 14 8 35 3 20 14 25 7 10 6 10-1M212 222l2 14"/>
          <path d="M572 502l-18 10-12 20-12 10-10 12-18 16-12 12-5 25-4 20-10 20-14 22-12 20-4 24 4 8-2 22-8 24-8 2 0 28-6 36 8 24 0 36M488 572l2 14M542 730l-20 30-8 14-2 50-10 20 2 18-4 22M606 482l-10 14 2 24 12 12 10 20 12-2 15-16 14-20 8-24 2-60-4-26 4-26M620 552l-10 20-2 40-4 34 6 38-2 26-12 18-8 30 2 24-2 16 14 14 2 36 10 20 0 28M642 733l2 26 6 16-8 20 10 18 16 10 4 16M642 88l4 20M674 78l2 28 12 20 14 18 10 14 6 14 2 14M718 50l2 12 6 14 0 14"/>
        </g>
        <g transform="translate(820 320) scale(.33333)" fill="none" stroke="#009dff" stroke-width="3.500">
          <path d="M207 74l-12-2-8 14-20 8-4 12 14-4 8 4M235 108l-8 18-1 20 8 24 0 26-6 22-10 5-15-3M362 196l-10 8-2 18-20 4-14 8M362 196l14 24-2 20-7 14 8 32 20 18 10 10 20 5 16 12M375 290l-8 16 6 16-4 20M585 268l-11 16"/>
          <path d="M91 440l6 20-4 18 4 26 4 24 10 32 18 16 8 28 0 30 8 24 10 12 8 24 26 30 6 20 5 40-4 22 8 2-12 12-14 28-14 20-6 20M44 598l2 30-6 18-15 30 22 6 11 22-6 30 8 34 16 30 8 20 0 30 5 42M193 457l-6 18 1 18 16 14 4 20 18 14 0 30-4 22 6 36 10 24 8 20 8 34-4 10-20 24 0 18 10 12 36 2 20-3 10 20 20 10"/>
          <path d="M283 421l-2 22 2 24-6 32 8 32 14 30 10 38 4 28 10 28 4 26 8 30 20 18 20 8-2 20 6 30M608 406l2 20 16 22 4 16 10 20 1 62-5 14-12 4-20 2-24-14-16-3-34-12-30 0-14-8-20-7-16-8-1-10 8-20M640 543l30 2 10-10 22-8 10-14 18-4 8-20-10-22 8-8 42-14M584 556l0-12-12-8-6-18-14-8-10-20-10-8M600 566l2 18-8 16-30 4-10 20-4 40M492 598l10 16 4 32-4 20M427 664l30 3 8 14M0 440l8 10-2 30 4 30-4 30-6 24M490 655l12 2"/>
        </g>
        <g fill="#b85c00" stroke="#1a1a1a" stroke-width="1.200"><circle cx="510" cy="380" r="2.600"/><circle cx="467" cy="474" r="2.600"/><circle cx="613" cy="469" r="2.600"/><circle cx="566" cy="577" r="2.600"/><circle cx="670" cy="557" r="2.600"/><circle cx="751" cy="455" r="2.600"/><circle cx="761" cy="552" r="2.600"/><circle cx="864" cy="507" r="2.600"/><circle cx="929" cy="401" r="2.600"/><circle cx="1028" cy="461" r="2.600"/></g>
      </svg>
    </div>

    <div class="status d-flex align-items-center justify-content-end position-relative">
      <div class="sb push" style="width:24px"><svg width="17" height="17" viewBox="0 0 17 17"><path d="M2 6q-1-4 3-5 4 2 2 6l7 7q-5 4-9-1-4-4-3-7zM8 8q5-1 6 3M4 4l4 7M1 12l14-9" fill="none" stroke="#222" stroke-width="1.800"/></svg></div>
      <div class="sb" style="width:66px"><span data-w="56">Koordinate:</span></div>
      <div class="sb push bg-white" style="width:304px"><span data-w="82">546711,3983986</span></div>
      <div class="sb" style="width:54px"><span data-w="41">Maßstab</span></div>
      <div class="sb push bg-white justify-content-start" style="width:85px;padding-left:6px"><span data-w="46">1:508402</span><div class="ms-auto h-100 d-flex align-items-center justify-content-center border-start" style="width:17px;background:#eee"><svg width="8" height="5"><path d="M0 0h8L4 5z"/></svg></div></div>
      <div class="sb push" style="width:24px"><svg width="17" height="17" viewBox="0 0 17 17"><path d="M6 15q-3-3 1-5l4-1q3-6 5-8 0 6-4 9 0 6-6 5z" fill="#666"/><circle cx="6" cy="5" r="4" fill="#fff" stroke="#d43" stroke-width="1.600"/><path d="M3 8l6-6" stroke="#d43" stroke-width="1.600"/></svg></div>
      <div class="sb justify-content-start" style="width:71px;padding-left:2px"><svg width="13" height="13" viewBox="0 0 13 13"><rect x=".5" y=".5" width="12" height="12" fill="#fff" stroke="#c9c9c9"/><path d="M3 3l7 7M10 3l-7 7" stroke="#000" stroke-width="3.200"/></svg><span style="margin-left:4px" data-w="43">Zeichnen</span></div>
      <div class="sb" style="width:69px;color:#8a8a8a"><span data-w="60">EPSG:32628</span></div>
      <div class="sb push" style="width:24px"><svg width="17" height="17" viewBox="0 0 17 17"><circle cx="8.500" cy="8.500" r="7.500" fill="#888"/><path d="M8.500 2v13M2 8.500h13M8.500 4l4.500 4.500L8.500 13 4 8.500z" fill="none" stroke="#e5e5e5" stroke-width="1.200"/></svg></div>
      <div class="sb push" style="width:24px"><svg width="15" height="15" viewBox="0 0 15 15"><path d="M7.500 1.500L14 13.500H1z" fill="#fbf2a2" stroke="#777" stroke-linejoin="round"/><path d="M7.500 5v5M7.500 11v1.500" stroke="#111" stroke-width="1.500"/></svg></div>
      <svg width="13" height="13" viewBox="0 0 13 13" style="position:absolute;right:0;bottom:0"><path d="M1 13L13 1M5 13l8-8M9 13l4-4" stroke="#999" stroke-width="1.200"/></svg>
    </div>
  </div>
</div>
<div class="tip"><span data-w="92">Feldrechner öffnen</span></div>
<svg class="ptr" width="14" height="20" viewBox="0 0 14 20"><path d="M1 1v15l3.400-3.200 2.500 5.500 3-1.300-2.500-5.200h4.600z" fill="#fff" stroke="#111a3a"/></svg>

<script>
// Dotted drag handles, drawn as a staggered pattern of light and dark pixels
function handle(w, h, vertical, single) {
  let s = '';
  const len = vertical ? h : w;
  for (let i = 0; i < len; i += single ? 5 : 3) {
    const o = !single && (i / 3) % 2 ? 3 : 0;
    const x = vertical ? o : i, y = vertical ? i : o;
    s += `<rect x="${x}" y="${y}" width="2" height="2" fill="#c2c2c2"/><rect x="${x+1}" y="${y+1}" width="1.500" height="1.500" fill="#fff"/>`;
  }
  return `<svg width="${w}" height="${h}">${s}</svg>`;
}
const icon = n => `<svg width="24" height="24" viewBox="0 0 24 24"><use href="#${n}" width="24" height="24"/></svg>`;
// Tokens: hN = drag handle, aN = drop-down arrow, gN = gap, "-" prefix = disabled, "+" = pressed
function bar(id, list) {
  document.getElementById(id).innerHTML = list.split(' ').map(t => {
    let m;
    if (m = t.match(/^h(\d+)$/)) return `<div class="hand" style="width:${m[1]}px">${handle(5, 30, true)}</div>`;
    if (m = t.match(/^a(\d)$/)) return `<div class="slot" style="width:12px"><svg width="9" height="5"><path d="M0 0h9L4.500 5z" fill="${m[1] === '1' ? '#000' : '#999'}"/></svg></div>`;
    if (m = t.match(/^g(\d+)$/)) return `<div style="width:${m[1]}px"></div>`;
    if (t === 'line') return `<div style="width:3px;height:30px;border-left:1px solid #aaa"></div>`;
    if (t === 'more') return `<div class="slot chev" style="width:16px">»</div>`;
    const off = t[0] === '-', on = t[0] === '+', n = t.replace(/^[-+]/, '');
    return `<div class="slot${on ? ' on' : ''}" style="width:35px"><div class="${off ? 'off' : ''}">${icon('i-' + n)}</div></div>`;
  }).join('');
}
bar('tb1', 'h10 new open save saveas newprint printmgr h14 g1 +touch pan pansel zin zout -z11 zfull zsel zlay zlast -znext refresh h14 info -gear a0 select a1 desel expr table abacus ruler a1 tip bookmark g32 more g8 h5 help more');
bar('tb2', 'h10 -pencils pencil -saveedit -addf -movef -node -delsel -cut -copy -paste h14 abc abcpin -abcpin2 -abceye -abcmove -abcrot -abcedit h14 db h14 h15 g1 layers h13 gr1 gr2 -gr3 line gv1 gv2 -gv3 -gv4 -tools -reg1 -reg2');
document.getElementById('vt').innerHTML = `<div class="d-flex justify-content-center">${handle(42, 5)}</div>` +
  'vec ras pg fea sail ora wms wcs wfs csv new del'.split(' ').map(n => `<div class="vi"${n === 'new' ? ' style="left:-6px"' : ''}>${icon('v-' + n)}${n === 'new' ? '<svg width="9" height="5" style="position:absolute;left:43px"><path d="M0 0h9L4.500 5z"/></svg>' : ''}</div>`).join('') +
  `<div class="d-flex justify-content-center" style="padding:8px 0 0">${handle(42, 5)}</div><div class="vi">${icon('v-edit')}</div>`;
document.querySelectorAll('.hg').forEach(e => e.innerHTML = handle(84, 5));
document.getElementById('dg').innerHTML = handle(4, 230, true, true);

// Break the coastline into short irregular steps
{
  const p = document.getElementById('coast'), n = p.getTotalLength();
  let seed = 7, d = '';
  const rnd = () => (seed = (seed * 16807) % 2147483647) / 2147483647 - .5;
  for (let s = 0; s < n; s += 6) {
    const q = p.getPointAtLength(s);
    d += (s ? 'L' : 'M') + (q.x + rnd() * 3.5).toFixed(1) + ' ' + (q.y + rnd() * 3.5).toFixed(1);
  }
  p.setAttribute('d', d + 'z');
}

// Rows: level, expander, checkbox, icon or colour, label
const rows = [
  [0,'-','g','t-grp','Vektor',30],[1,'-','x','t-pts','sites',27],[2,'dot'],[1,'-','x','t-line','stream',41],[2,'ln'],
  [1,'-','x','t-polys','voronoi',43],[2,'#0000ff'],[1,'-','o','t-poly','landtype',50],
  [2,'#005000','Croton shrubland on the coa...',146],[2,'#275227','Montane mosaic of shrubland...',149],[2,'#565400','Open and woody-based herb...',149],
  [2,'#d3ff80','Semi-evergreen woodland on...',149],[2,'#007800','Submontane shrubland on th...',147],[2,'#00aa00','Succlent shrubland on limest...',144],
  [1,'-','o','t-poly','resources',56],[2,'#e67300','Goldkupfererz',67],[2,'#8a9199','Silber',26],[2,'#4d5a63','Zinn',20],
  [1,'-','o','t-poly','kuestenlinie',69],[2,'red'],[0,'-','x','t-grp','Raster',32],[1,'','x','t-ras','relief',29],[1,'+','x','t-ras','atlantgis_dgm',82]];
const box = k => `<svg width="13" height="13" viewBox="0 0 13 13"><rect x=".5" y=".5" width="12" height="12" fill="${k === 'o' ? '#fafafa' : '#fff'}" stroke="#c6c6c6"/>${k === 'o' ? '' : `<path d="M3.500 3.500l6 6M9.500 3.500l-6 6" stroke="${k === 'g' ? '#999' : '#000'}" stroke-width="3"/>`}</svg>`;
document.getElementById('tree').insertAdjacentHTML('beforeend', rows.map(r => {
  if (r[0] === 2) {
    const c = r[1];
    let s = c === 'dot' ? '<svg width="16" height="16"><circle cx="8" cy="8" r="2.800" fill="#b85c00" stroke="#222" stroke-width="1.200"/></svg>'
      : c === 'ln' ? '<svg width="16" height="16"><path d="M0 8.500h16" stroke="#009dff"/></svg>'
      : c === 'red' ? '<div class="sw" style="border:1px solid #f55"></div>'
      : `<div class="sw" style="background:${c}"></div>`;
    return `<div class="trow" style="padding-left:63px">${s}<div class="nm" style="margin-left:5px">${r[2] ? `<span data-w="${r[3]}">${r[2]}</span>` : ''}</div></div>`;
  }
  const pad = 5 + r[0] * 20;
  const ex = r[1] ? `<svg width="9" height="9"><rect x=".5" y=".5" width="8" height="8" fill="#fff" stroke="#888"/><path d="M2 4.500h5${r[1] === '+' ? 'M4.500 2v5' : ''}" stroke="#333"/></svg>` : '<div style="width:9px"></div>';
  return `<div class="trow${r[4] === 'voronoi' ? ' sel' : ''}" style="padding-left:${pad}px">${ex}<div style="margin-left:9px">${box(r[2])}</div><div style="margin-left:6px"><svg width="16" height="16"><use href="#${r[3]}" width="16" height="16"/></svg></div><div class="nm${r[0] ? ' fw-bold' : ''}" style="margin-left:6px"><span data-w="${r[5]}">${r[4]}</span></div></div>`;
}).join(''));

document.querySelectorAll('[data-w]').forEach(e => {
  const w = e.getBoundingClientRect().width, t = +e.dataset.w;
  e.style.letterSpacing = ((t - w) / e.textContent.length) + 'px';
});
</script>
</body>
</html>
